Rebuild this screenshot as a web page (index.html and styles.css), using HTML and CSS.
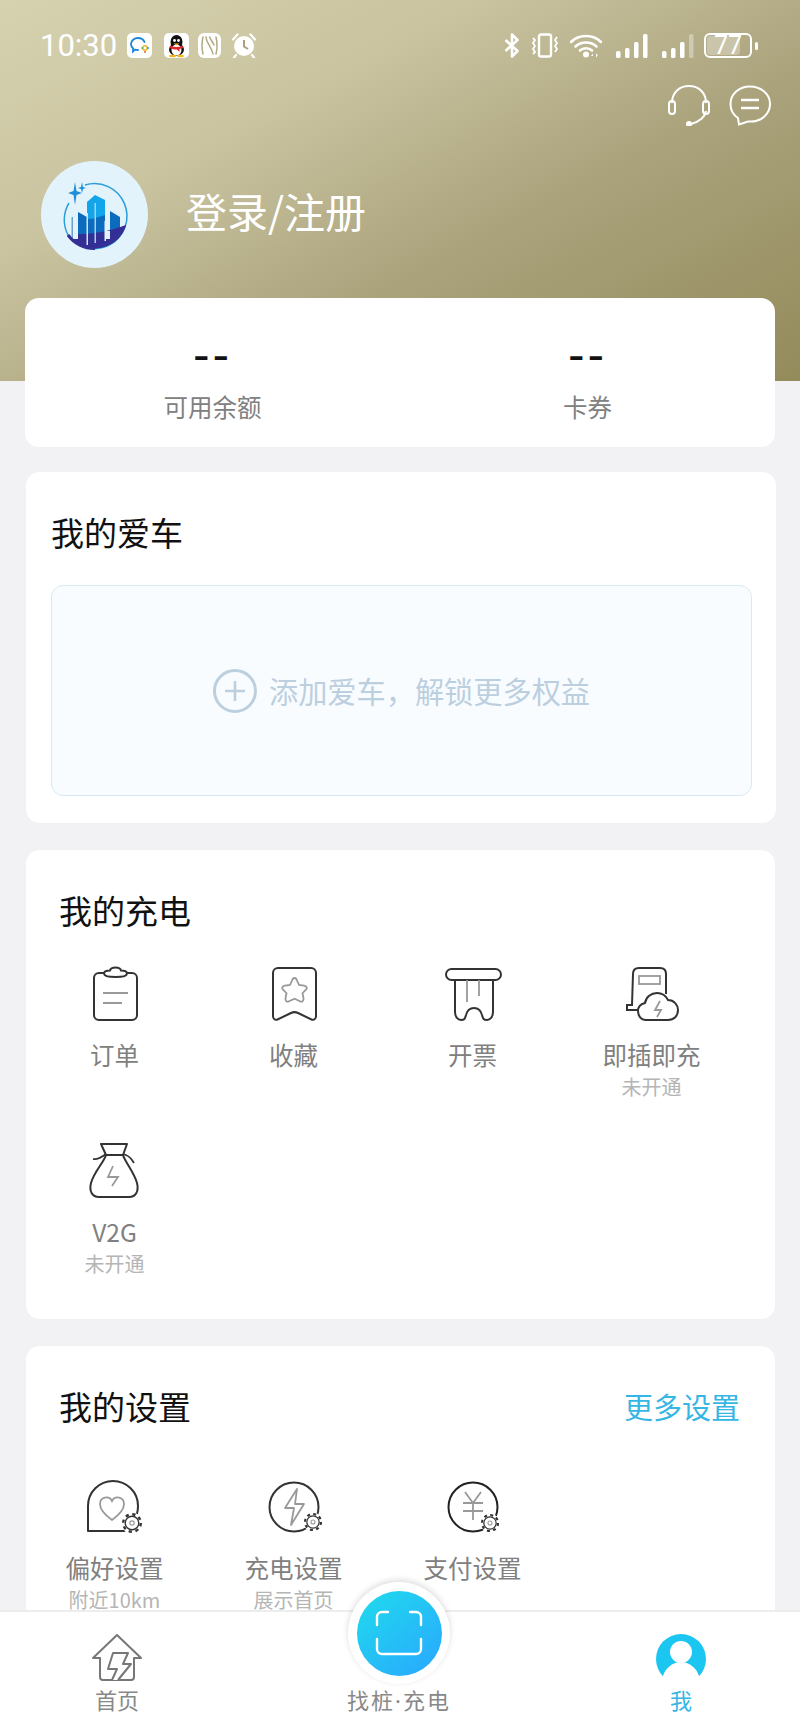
FILE: index.html
```html
<!DOCTYPE html>
<html lang="zh-CN">
<head>
<meta charset="utf-8">
<title>我的</title>
<link rel="stylesheet" href="styles.css">
</head>
<body>
<svg class="defs" width="0" height="0">
  <defs>
    <symbol id="gear" viewBox="0 0 24 24">
      <circle cx="12" cy="12" r="11.5" fill="#fff"/>
      <circle cx="12" cy="12" r="9.6" fill="none" stroke="#333" stroke-width="2.6" stroke-dasharray="3.6 3.94"/>
      <circle cx="12" cy="12" r="7.4" fill="#fff" stroke="#333" stroke-width="1.5"/>
      <circle cx="12" cy="12" r="2.4" fill="none" stroke="#999" stroke-width="1.3"/>
    </symbol>
  </defs>
</svg>
<div class="page">
  <header class="hero">
    <div class="status">
      <div class="status-group">
        <span class="time">10:30</span>
        <svg class="st st-a" width="25" height="25" viewBox="0 0 25 25"><rect width="25" height="25" rx="5" fill="#fff"/><path d="M4 11c0-3.500 3.300-6 7-6 3 0 5.500 1.500 6.500 4M11 17c-1 0-2-.1-2.800-.4L6 18.500l.1-3C4.800 14.400 4 12.800 4 11" fill="none" stroke="#1a86d8" stroke-width="1.800" stroke-linecap="round"/><circle cx="18" cy="15" r="2.200" fill="none" stroke="#f0b429" stroke-width="1.500"/><circle cx="21" cy="15" r="1" fill="#2a9fe0"/><circle cx="15.300" cy="15" r="1" fill="#5ab947"/><circle cx="18" cy="19" r="1" fill="#e8663d"/></svg>
        <svg class="st st-b" width="25" height="25" viewBox="0 0 25 25"><rect width="25" height="25" rx="5" fill="#fff"/><ellipse cx="12.500" cy="9" rx="6" ry="7" fill="#111"/><ellipse cx="12.500" cy="16.500" rx="7.500" ry="6.500" fill="#111"/><ellipse cx="12.500" cy="17" rx="5" ry="5.500" fill="#fff"/><circle cx="10.500" cy="7.500" r="1.400" fill="#fff"/><circle cx="14.500" cy="7.500" r="1.400" fill="#fff"/><path d="M9.500 10.500h6l-3 2z" fill="#f5b81f"/><path d="M6.500 12.500c4 2 8 2 12 0l.5 2.500-3.500 1v3l-2.500-2.500c-2.500 0-5-.4-7-1.500z" fill="#e3262b"/><ellipse cx="8.500" cy="23" rx="3.500" ry="1.300" fill="#f5b81f"/><ellipse cx="16.500" cy="23" rx="3.500" ry="1.300" fill="#f5b81f"/></svg>
        <svg class="st st-c" width="23" height="25" viewBox="0 0 23 25"><rect width="23" height="25" rx="6" fill="#fff"/><path d="M5 4c-1.200 5-1.200 12 0 17M8 4c.5 6 6 11 7 17M11.500 4c1.500 3 3 5 4.500 8M18 21c1.200-5 1.200-12 0-17" fill="none" stroke="#b0a983" stroke-width="1.500" stroke-linecap="round"/></svg>
        <svg class="st st-d" width="26" height="25" viewBox="0 0 26 25"><circle cx="13" cy="13" r="10" fill="#fff"/><path d="M13 7v6.500l4 2.500" fill="none" stroke="#a8a17a" stroke-width="2"/><path d="M2 6.500 6.500 1.500M24 6.500 19.500 1.500M5 22l-2 2.500M21 22l2 2.500" stroke="#fff" stroke-width="2.200" stroke-linecap="round"/></svg>
      </div>
      <div class="status-group status-right">
        <svg width="16" height="25" viewBox="0 0 16 25"><path d="M1.500 7l12 11-5.500 5.500V1.500L13.500 7 1.500 18" fill="none" stroke="#fff" stroke-width="2.600" stroke-linejoin="round"/></svg>
        <svg width="30" height="25" viewBox="0 0 30 25"><rect x="9" y="1.500" width="12" height="22" rx="2" fill="none" stroke="#fff" stroke-width="2.400"/><path d="M3 5l2 2-2 3 2 3-2 3 2 3-2 2M27 4l-2 3 2 3-2 3 2 3-2 3" fill="none" stroke="#fff" stroke-width="1.800"/></svg>
        <svg class="st-wifi" width="32" height="25" viewBox="0 0 32 25"><path d="M1 9c8-8 22-8 30 0M5.500 13.500c5.500-5.500 15.500-5.500 21 0M10 17.500c3-3 9-3 12 0" fill="none" stroke="#fff" stroke-width="2.500" stroke-linecap="round"/><circle cx="16" cy="21.500" r="3" fill="#fff"/><path d="M23 20.500l-2 2.500h2zM26 20.500v4l2-2.500z" fill="#fff"/></svg>
        <svg class="st-sig" width="32" height="25" viewBox="0 0 32 25"><g fill="#fff"><rect x="0" y="18" width="4.500" height="7" rx="1.500"/><rect x="9" y="15" width="4.500" height="10" rx="1.500"/><rect x="18" y="9" width="4.500" height="16" rx="1.500"/><rect x="27" y="1" width="4.500" height="24" rx="1.500"/></g></svg>
        <svg class="st-sig" width="32" height="25" viewBox="0 0 32 25"><g fill="#fff"><rect x="0" y="18" width="4.500" height="7" rx="1.500"/><rect x="9" y="15" width="4.500" height="10" rx="1.500"/><rect x="18" y="9" width="4.500" height="16" rx="1.500"/><rect x="27" y="1" width="4.500" height="24" rx="1.500" opacity=".35"/></g></svg>
        <div class="battery"><span class="battery-fill"></span><span class="battery-num">77</span></div>
      </div>
    </div>
    <div class="actions">
      <svg width="42" height="41" viewBox="0 0 42 41"><path d="M4 18C4 8 11 1 21 1s17 7 17 17M38 26c-1 6-7 11-15 13" fill="none" stroke="#fff" stroke-width="2"/><rect x="1" y="16" width="6" height="13" rx="3" fill="none" stroke="#fff" stroke-width="2"/><rect x="35" y="16" width="6" height="13" rx="3" fill="none" stroke="#fff" stroke-width="2"/><circle cx="21" cy="39" r="3" fill="#fff"/></svg>
      <svg width="42" height="41" viewBox="0 0 42 41"><path d="M21 1.500C10 1.500 1.500 9 1.500 19c0 6 3 11 7.500 14l1 6.500 9-3c.8.100 1.600.100 2.500.100 11 0 19.500-7.600 19.500-17.600S32 1.500 21 1.500z" fill="none" stroke="#fff" stroke-width="2"/><path d="M12 15h18M12 23h18" stroke="#fff" stroke-width="2.500"/></svg>
    </div>
    <div class="profile">
      <div class="avatar">
        <svg width="107" height="107" viewBox="0 0 107 107">
          <defs><clipPath id="ringclip"><circle cx="54" cy="55" r="32.500"/></clipPath></defs>
          <path d="M44 24a32.500 32.500 0 1 1-17 50M27 74a32.500 32.500 0 0 1 1-32" fill="none" stroke="#2b9ed8" stroke-width="1.500"/>
          <g clip-path="url(#ringclip)">
            <path d="M37 51l9 5v36h-9z" fill="#0d6bbd"/>
            <path d="M46 41l8-7 10 5v50H46z" fill="#12a5ea"/>
            <path d="M69 50l10 6v34H69z" fill="#0d6bbd"/>
            <path d="M46 58c6 0 12-2 18-4v36H46z" fill="#0d6bbd"/>
            <path d="M37 73c14 0 30-2 53-11v34H28c-3-6 2-23 9-23z" fill="#332f94"/>
            <path d="M64 78h5v-8h-5z" fill="#e3f3fc"/>
            <path d="M28 78h9V69h-9z" fill="#e3f3fc"/>
            <rect x="45.500" y="52" width="1.500" height="32" fill="#cde6f7"/>
            <rect x="53.500" y="42" width="1.500" height="40" fill="#9fd3f2"/>
            <rect x="63.500" y="60" width="1.500" height="20" fill="#e3f3fc"/>
          </g>
          <rect x="30.500" y="56" width="1.500" height="21" fill="#6a9fce"/>
          <path d="M27 74a32.500 32.500 0 0 0 27 13.500" fill="none" stroke="#332f94" stroke-width="3"/>
          <path d="M34 21l1.500 9 5.500 2-5.500 2-1.500 10-1.500-10-5.500-2 5.500-2z" fill="#1f8fd6"/>
          <path d="M41 21l1 5 3 1-3 1-1 4-1-4-3-1 3-1z" fill="#1f8fd6"/>
        </svg>
      </div>
      <span class="login">登录/注册</span>
    </div>
  </header>

  <section class="stats">
    <div class="stat"><div class="stat-value">--</div><div class="stat-label">可用余额</div></div>
    <div class="stat"><div class="stat-value">--</div><div class="stat-label">卡券</div></div>
  </section>

  <section class="card card-car">
    <h2 class="title title-car">我的爱车</h2>
    <div class="add-car">
      <svg width="44" height="44" viewBox="0 0 44 44"><circle cx="22" cy="22" r="20.500" fill="none" stroke="#bbcfdf" stroke-width="3"/><path d="M12 22h20M22 12v20" stroke="#bbcfdf" stroke-width="2.600"/></svg>
      <span class="add-text">添加爱车，解锁更多权益</span>
    </div>
  </section>

  <section class="card card-charge">
    <h2 class="title">我的充电</h2>
    <div class="grid">
      <div class="cell">
        <svg class="ico" width="60" height="60" viewBox="0 0 60 60"><path d="M20 11h-6a5 5 0 0 0-5 5v37a5 5 0 0 0 5 5h33a5 5 0 0 0 5-5V16a5 5 0 0 0-5-5h-6" fill="none" stroke="#333" stroke-width="2"/><path d="M25 8.500c1-4 10-4 11 0 4 0 6 1.500 6 3 0 2-3 3.500-11.500 3.500S19 13.500 19 11.500c0-1.500 2-3 6-3z" fill="#fff" stroke="#333" stroke-width="2"/><path d="M18 31h25M18 41h19" stroke="#999" stroke-width="1.800"/></svg>
        <div class="label">订单</div>
      </div>
      <div class="cell">
        <svg class="ico" width="60" height="60" viewBox="0 0 60 60"><path d="M14 6h33a5 5 0 0 1 5 5v43c0 3-2 4.500-4.500 3.500L34 51c-2-1-5-1-7 0L13.500 57.500C11 58.500 9 57 9 54V11a5 5 0 0 1 5-5z" fill="none" stroke="#333" stroke-width="2"/><path d="M30.500 16c1 0 2 1 2.500 2.500l2 4.500 5 .7c3 .5 3.500 2.500 2 4l-3.500 3.500 1 5c.5 3-1.500 4-3.500 3l-5.500-2.500-5.500 2.500c-2 1-4 0-3.500-3l1-5-3.500-3.500c-1.500-1.500-1-3.500 2-4l5-.7 2-4.500c.5-1.500 1.500-2.500 2.500-2.500z" fill="none" stroke="#999" stroke-width="1.800"/></svg>
        <div class="label">收藏</div>
      </div>
      <div class="cell">
        <svg class="ico" width="60" height="60" viewBox="0 0 60 60"><rect x="3" y="7" width="55" height="11" rx="5.500" fill="none" stroke="#333" stroke-width="2"/><path d="M12 17v33c0 5 3 8 6 8 4 0 4-2 5-5 1-4 4-7 8-7s7 3 8 7c1 3 1 5 5 5 3 0 6-3 6-8V17" fill="none" stroke="#333" stroke-width="2"/><path d="M24 18v22M36 18v16" stroke="#999" stroke-width="1.800"/></svg>
        <div class="label">开票</div>
      </div>
      <div class="cell">
        <svg class="ico" width="60" height="60" viewBox="0 0 60 60"><path d="M18 48h-13v-5h5l1-31c0-4 2-6 6-6h21c4 0 6 2 6 6v20" fill="none" stroke="#333" stroke-width="2"/><rect x="17" y="14" width="21" height="8" fill="none" stroke="#999" stroke-width="1.800"/><path d="M24 58c-5 0-8-4-8-9 0-4 3-7 7-8 1-6 6-10 12-10 5 0 9 3 11 7 6 0 10 5 10 10 0 6-4 10-10 10z" fill="#fff" stroke="#333" stroke-width="2"/><path d="M38 39l-5 9h6l-4 7" fill="none" stroke="#999" stroke-width="1.800"/></svg>
        <div class="label">即插即充</div>
        <div class="sub">未开通</div>
      </div>
      <div class="cell">
        <svg class="ico" width="60" height="60" viewBox="0 0 60 60"><path d="M16 5h26l-4 11H21z" fill="none" stroke="#333" stroke-width="2" stroke-linejoin="round"/><path d="M21 16c-2 7-12 17-15 28-2 8 1 14 8 14h30c7 0 10-6 8-14-3-11-12-21-14-28" fill="none" stroke="#333" stroke-width="2"/><path d="M8 20c4 1 9-2 13-5M38 15c4 1 7 3 9 6l2 3" fill="none" stroke="#333" stroke-width="1.800"/><path d="M28 27l-5 11h10l-6 9" fill="none" stroke="#999" stroke-width="1.800"/></svg>
        <div class="label">V2G</div>
        <div class="sub">未开通</div>
      </div>
    </div>
  </section>

  <section class="card card-settings">
    <div class="title-row">
      <h2 class="title title-flat">我的设置</h2>
      <span class="more">更多设置</span>
    </div>
    <div class="grid grid-settings">
      <div class="cell">
        <svg class="ico" width="60" height="60" viewBox="0 0 60 60"><path d="M3 54V29a25 25 0 0 1 50 0c0 10-6 21-14 25z" fill="none" stroke="#333" stroke-width="2" stroke-linejoin="round"/><path d="M27 43C20 38 15 33 15 27c0-7 9-9 12-3 3-6 12-4 12 3 0 6-5 11-12 16z" fill="none" stroke="#999" stroke-width="1.800"/><use href="#gear" x="36" y="35" width="22" height="22"/></svg>
        <div class="label">偏好设置</div>
        <div class="sub">附近10km</div>
      </div>
      <div class="cell">
        <svg class="ico" width="60" height="60" viewBox="0 0 60 60"><circle cx="30" cy="30" r="24.500" fill="none" stroke="#333" stroke-width="2"/><path d="M33 12L21 31h9l-3 17 13-21h-9z" fill="none" stroke="#999" stroke-width="1.800" stroke-linejoin="round"/><use href="#gear" x="39" y="35" width="20" height="20"/></svg>
        <div class="label">充电设置</div>
        <div class="sub">展示首页</div>
      </div>
      <div class="cell">
        <svg class="ico" width="60" height="60" viewBox="0 0 60 60"><circle cx="30" cy="30" r="24.500" fill="none" stroke="#222" stroke-width="2"/><path d="M22 15l8 11 8-11M20 26h20M20 34h20M30 26v17" fill="none" stroke="#999" stroke-width="1.800"/><use href="#gear" x="37" y="36" width="20" height="20"/></svg>
        <div class="label">支付设置</div>
      </div>
    </div>
  </section>

  <nav class="tabbar">
    <div class="tab">
      <svg class="tab-ico" width="50" height="48" viewBox="0 0 50 48"><path d="M8 24H1L25 1l24 23h-7v19a3 3 0 0 1-3 3H11a3 3 0 0 1-3-3z" fill="none" stroke="#777" stroke-width="2" stroke-linejoin="round"/><path d="M20 46l5-11h-9l5-16h15l-5 11h8L26 46M30 19" fill="#fff" stroke="#777" stroke-width="2" stroke-linejoin="round"/></svg>
      <span class="tab-label">首页</span>
    </div>
    <div class="tab">
      <div class="scan">
        <div class="scan-disc">
          <svg width="50" height="48" viewBox="0 0 50 48"><path d="M14 3H8a5 5 0 0 0-5 5v8M36 3h6a5 5 0 0 1 5 5v8M3 30v10a5 5 0 0 0 5 5h34a5 5 0 0 0 5-5V30" fill="none" stroke="#fff" stroke-width="2.400" stroke-linecap="round"/></svg>
        </div>
      </div>
      <span class="tab-label tab-wide">找桩·充电</span>
    </div>
    <div class="tab">
      <svg class="tab-ico" width="50" height="48" viewBox="0 0 50 48"><circle cx="25" cy="25" r="25" fill="#1bc6f0"/><circle cx="25" cy="18" r="11" fill="#fff"/><path d="M0 48V42h7c2-7 9-14 18-14s16 7 18 14h7v6z" fill="#fff"/></svg>
      <span class="tab-label tab-active">我</span>
    </div>
  </nav>
</div>
</body>
</html>
```

FILE: styles.css
```css
* { box-sizing: border-box; }
html, body { margin: 0; padding: 0; }
body { font-family: "Noto Sans CJK SC", "Noto Sans", sans-serif; background: #f2f1f3; }
.defs { display: block; height: 0; }
.page { position: relative; width: 800px; height: 1727px; overflow: hidden; background: #f2f1f3; }

.hero {
  height: 381px;
  padding-top: 33px;
  background: linear-gradient(152deg, #d6d1ae 0%, #c9c3a0 32%, #a9a27b 62%, #948b5b 100%);
}
.status { display: flex; justify-content: space-between; height: 25px; padding: 0 48px 0 40px; }
.status-group { display: flex; align-items: center; }
.status-right { gap: 10px; }
.st-wifi { margin-left: 0; }
.st-sig { margin-left: 4px; }
.time { font-family: Roboto, sans-serif; font-size: 31px; line-height: 25px; color: #fff; width: 87px; }
.st-b { margin-left: 12px; }
.st-c { margin-left: 9px; }
.st-d { margin-left: 10px; }
.battery { position: relative; width: 48px; height: 25px; border: 2px solid #fff; border-radius: 6px; }
.battery::after { content: ""; position: absolute; right: -8px; top: 7px; width: 3px; height: 8px; border-radius: 2px; background: #fff; }
.battery-fill { position: absolute; left: 1px; top: 1px; bottom: 1px; width: 33px; border-radius: 3px; background: rgba(255,255,255,.3); }
.battery-num { position: relative; display: block; text-align: center; font-family: Roboto, sans-serif; font-size: 25px; line-height: 22px; color: #fff; }

.actions { display: flex; justify-content: flex-end; gap: 19px; margin-top: 27px; padding-right: 29px; }
.profile { display: flex; align-items: center; gap: 38px; margin-top: 35px; padding-left: 41px; }
.avatar { width: 107px; height: 107px; border-radius: 50%; background: #e3f3fc; }
.avatar svg { display: block; }
.login { font-size: 41px; line-height: 50px; color: #fff; margin-top: -9px; }

.stats { display: flex; height: 149px; margin: -83px 25px 0; background: #fff; border-radius: 14px; }
.stat { flex: 1; text-align: center; }
.stat-value { height: 60px; margin-top: 29px; font-family: "DejaVu Sans", sans-serif; font-size: 46px; line-height: 56px; letter-spacing: 3px; color: #111; }
.stat-label { margin-top: 3px; font-size: 24.5px; line-height: 34px; color: #808080; }

.card { margin: 25px 24px 0 26px; background: #fff; border-radius: 14px; }
.card-car { height: 351px; padding-top: 38px; }
.card-charge { height: 469px; margin: 27px 25px 0 26px; padding-top: 38px; }
.card-settings { height: 420px; margin: 27px 25px 0 26px; padding-top: 38px; }

.title { margin: 0; padding-left: 33px; font-size: 33px; font-weight: 400; line-height: 44px; color: #111; }
.title-car { padding-left: 25px; }
.title-row { display: flex; justify-content: space-between; align-items: center; padding-right: 35px; }
.more { font-size: 29px; line-height: 44px; color: #35b6e4; }

.add-car {
  display: flex; align-items: center; justify-content: center; gap: 12px;
  height: 211px; margin: 31px 24px 0 25px;
  background: #f8fcff; border: 1px solid #d8ebf2; border-radius: 12px;
}
.add-text { font-size: 29.2px; line-height: 40px; color: #bccfdf; margin-top: -2px; }

.grid { display: grid; grid-template-columns: repeat(4, 179px); row-gap: 38px; margin: 30px 0 0 -1px; }
.grid-settings { margin-top: 49px; }
.cell { display: flex; flex-direction: column; align-items: center; }
.ico { display: block; }
.label { margin-top: 14px; font-size: 24.5px; line-height: 37px; color: #808080; white-space: nowrap; }
.grid-settings .label { margin-top: 12px; }
.sub { font-size: 20px; line-height: 28px; color: #b5b5b5; white-space: nowrap; }

.tabbar {
  position: absolute; left: 0; right: 0; bottom: 0; height: 117px;
  display: flex; gap: 182px; padding-left: 67px;
  background: #fff; border-top: 2px solid #ededed;
}
.tab { position: relative; width: 100px; display: flex; flex-direction: column; align-items: center; justify-content: flex-end; padding-bottom: 12px; }
.tab-ico { display: block; }
.tab-label { font-family: "Noto Sans", "Noto Sans CJK SC", sans-serif; font-size: 22px; line-height: 30px; color: #888; white-space: nowrap; margin-top: 3px; }
.tab-wide { letter-spacing: 2px; }
.tab-active { color: #35b6e4; }
.scan {
  position: absolute; left: -1px; top: -30px;
  width: 102px; height: 102px; border-radius: 50%;
  display: flex; align-items: center; justify-content: center;
  background: #fff; box-shadow: 0 -2px 6px rgba(0,0,0,.14);
}
.scan-disc {
  width: 85px; height: 85px; border-radius: 50%;
  display: flex; align-items: center; justify-content: center;
  background: linear-gradient(140deg, #1fdcec 0%, #2aa6ff 100%);
}
```
